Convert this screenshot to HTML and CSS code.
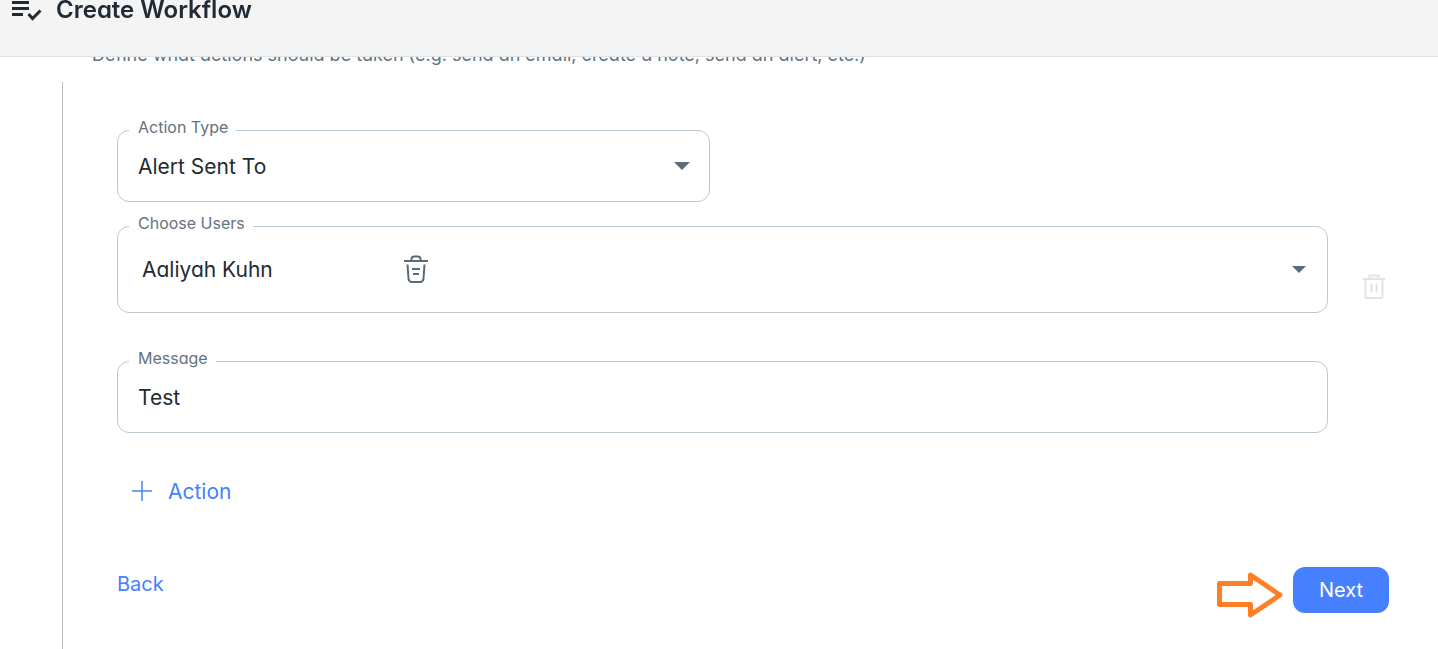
FILE: index.html
```html
<!DOCTYPE html>
<html lang="en">
<head>
    <meta charset="UTF-8">
    <meta name="viewport" content="width=device-width, initial-scale=1.0">
    <title>Create Workflow</title>
    <link rel="stylesheet" href="styles.css">
</head>
<body>
    <header class="topbar">
        <svg class="topbar-icon" width="30" height="22" viewBox="0 0 30 22" fill="none" stroke="currentColor" stroke-width="3">
            <path d="M0 2.500h17M0 8.500h17M0 14.500h11"/>
            <path d="M16.500 14l4 4.500L28.500 10.500"/>
        </svg>
        <h1>Create Workflow</h1>
    </header>

    <main>
        <p class="description">Define what actions should be taken (e.g. send an email, create a note, send an alert, etc.)</p>

        <form class="step">
            <!-- one action -->
            <div class="action">
                <div class="fields">
                    <fieldset class="field field-type">
                        <legend><label for="type">Action Type</label></legend>
                        <div class="control">
                            <select id="type">
                                <option>Alert Sent To</option>
                            </select>
                            <svg class="caret" width="16" height="8" viewBox="0 0 16 8"><path d="M0 0h16L8 8z"/></svg>
                        </div>
                    </fieldset>

                    <fieldset class="field field-users">
                        <legend>Choose Users</legend>
                        <div class="users">
                            <span class="user-name">Aaliyah Kuhn</span>
                            <button type="button" class="icon-btn" aria-label="Remove user">
                                <svg width="26" height="28" viewBox="0 0 26 28" fill="none" stroke="currentColor" stroke-width="2">
                                    <path d="M1 6h24M8.500 6V4Q8.500 1.500 11 1.500h4Q17.500 1.500 17.500 4v2"/>
                                    <path d="M4.500 9.500l1 14Q5.800 27 9 27h8Q20.200 27 20.500 23.500L21.500 9.500"/>
                                    <path d="M9 14h8M10 19h6"/>
                                </svg>
                            </button>
                            <button type="button" class="icon-btn open-btn" aria-label="Open user list">
                                <svg class="caret-icon" width="14" height="7" viewBox="0 0 14 7"><path d="M0 0h14L7 7z"/></svg>
                            </button>
                        </div>
                    </fieldset>

                    <fieldset class="field">
                        <legend><label for="message">Message</label></legend>
                        <div class="control">
                            <input type="text" id="message" value="Test">
                        </div>
                    </fieldset>
                </div>

                <button type="button" class="icon-btn delete-btn" aria-label="Delete action" disabled>
                    <svg width="22" height="25" viewBox="0 0 22 25" fill="none" stroke="currentColor" stroke-width="2">
                        <path d="M0 5h22M6.500 5V1.500h9V5M2.500 5v17.500q0 1.500 1.500 1.500h14q1.500 0 1.500-1.500V5M8.500 9.500v9M13.500 9.500v9"/>
                    </svg>
                </button>
            </div>

            <button type="button" class="text-btn add-btn">
                <svg width="22" height="22" viewBox="0 0 22 22" fill="none" stroke="currentColor" stroke-width="1.5">
                    <path d="M11 1v20M1 11h20"/>
                </svg>
                Action
            </button>

            <div class="buttons">
                <button type="button" class="text-btn back-btn">Back</button>
                <div class="next">
                    <svg class="pointer" width="68" height="48" viewBox="0 0 68 48" fill="none" stroke="#ff7f27" stroke-width="5" stroke-linejoin="round">
                        <path d="M3.500 12.500H34.500V4L64 24 34.500 44V33.500H3.500z"/>
                    </svg>
                    <button type="button" class="next-btn">Next</button>
                </div>
            </div>
        </form>
    </main>
</body>
</html>
```
FILE: styles.css
```css
*{
    margin: 0;
    padding: 0;
    box-sizing: border-box;
}
body{
    font-family: Inter, "Liberation Sans", sans-serif;
    font-feature-settings: "cv11";
    font-size: 21px;
    color: #212b36;
    background: #fff;
}
button, input, select{
    font: inherit;
    font-feature-settings: inherit;
    color: inherit;
    background: none;
    border: none;
}
button{
    cursor: pointer;
}

/* header */
.topbar{
    position: fixed;
    top: 0;
    left: 0;
    right: 0;
    z-index: 1;
    display: flex;
    gap: 14px;
    padding: 0 12px 36px;
    background: #f4f4f4;
    border-bottom: 1px solid #dfe3e6;
}
.topbar-icon{
    display: block;
    height: 22px;
    margin-bottom: -2px;
}
h1{
    font-size: 24px;
    font-weight: 600;
    line-height: 20px;
}

/* step */
main{
    display: flex;
    flex-direction: column;
    min-height: 100vh;
    padding: 43px 0 0 62px;
}
.description{
    padding-left: 30px;
    margin-bottom: 15px;
    font-size: 18px;
    line-height: 24px;
    color: #637381;
}
.step{
    flex: 1;
    padding: 36px 49px 36px 54px;
    border-left: 1px solid #bdbdbd;
}
.action{
    display: flex;
    align-items: center;
}
.fields{
    flex: 1;
    display: flex;
    flex-direction: column;
    gap: 12px;
    padding-bottom: 24px;
}
.field{
    min-width: 0;
    padding: 0 11px 11px;
    border: 1px solid #bcc8d1;
    border-radius: 12px;
}
.field-type{
    width: 49%;
}
.field-users{
    margin-bottom: 24px;
}
legend{
    padding: 0 8px 6px 9px;
    font-size: 16px;
    line-height: 18px;
    color: #637381;
}
.control{
    position: relative;
}
.control select, .control input{
    display: block;
    width: 100%;
    height: 48px;
    padding: 0 9px;
    appearance: none;
    outline: none;
}
.caret{
    position: absolute;
    right: 8px;
    top: 20px;
    fill: #5b6b79;
    pointer-events: none;
}
.users{
    display: flex;
    align-items: center;
    height: 62px;
    margin-bottom: 1px;
    padding: 0 10px 0 13px;
}
.user-name{
    width: 261px;
}
.icon-btn{
    color: #5b6b79;
}
.icon-btn svg{
    display: block;
}
.open-btn{
    margin-left: auto;
}
.caret-icon{
    fill: #5b6b79;
}
.delete-btn{
    width: 61px;
    padding: 0 0 2px 35px;
    color: #dfe3e8;
}

/* buttons */
.text-btn{
    color: #4680ff;
}
.add-btn{
    display: flex;
    align-items: center;
    gap: 15px;
    height: 40px;
    margin: 14px 0 0 14px;
}
.buttons{
    display: flex;
    justify-content: space-between;
    align-items: flex-start;
    margin-top: 56px;
    font-size: 20px;
    font-feature-settings: normal;
}
.back-btn{
    line-height: 34px;
}
.next{
    position: relative;
}
.pointer{
    position: absolute;
    right: 105px;
    top: 4px;
}
.next-btn{
    width: 96px;
    height: 46px;
    color: #fff;
    background: #4680ff;
    border-radius: 12px;
}
```
